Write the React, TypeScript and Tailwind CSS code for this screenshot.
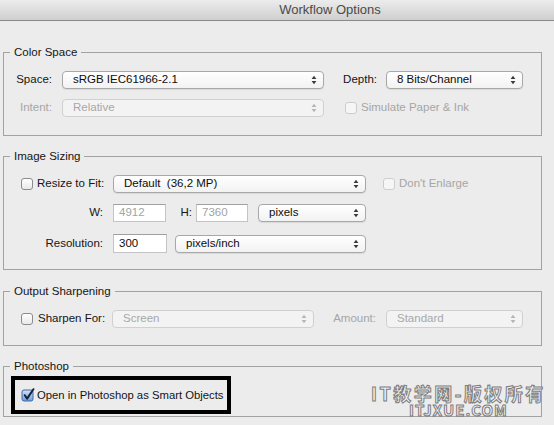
import React from 'react';

const Arrows = ({ color = '#3a3a3a' }: { color?: string }) => (
  <svg width="6" height="10" viewBox="0 0 6 10" className="shrink-0">
    <path d="M3 0.8L5.4 3.9H0.6Z M3 9.2L0.6 6.1H5.4Z" fill={color} />
  </svg>
);

const Select = ({ value, width, disabled }: { value: string; width: string; disabled?: boolean }) => (
  <div
    className={`${width} h-[18px] flex items-center justify-between rounded-[4px] border pl-[10px] pr-[6px] ${
      disabled
        ? 'border-[#d0d0d0] bg-[#f3f3f3] text-[#a8a8a8]'
        : 'border-[#a8a8a8] bg-linear-to-b from-white to-[#f2f2f2] text-[#0d0d0d] shadow-[0_1px_1px_rgba(0,0,0,0.08)]'
    }`}
  >
    <span className="leading-none whitespace-pre">{value}</span>
    <Arrows color={disabled ? '#b5b5b5' : '#3a3a3a'} />
  </div>
);

const Check = ({ disabled }: { disabled?: boolean }) => (
  <span
    className={`block shrink-0 w-[12px] h-[12px] rounded-[3px] border ${
      disabled ? 'border-[#cdcdcd] bg-[#f6f6f6]' : 'border-[#8c8c8c] bg-linear-to-b from-white to-[#e9e9e9]'
    }`}
  />
);

const Checked = () => (
  <svg width="14" height="14" viewBox="0 0 14 14" className="block shrink-0">
    <defs>
      <linearGradient id="cbfill" x1="0" y1="0" x2="0" y2="1">
        <stop offset="0" stopColor="#d3e3f8" />
        <stop offset="1" stopColor="#6c9ddc" />
      </linearGradient>
    </defs>
    <rect x="1" y="2" width="11" height="11" rx="2" fill="url(#cbfill)" stroke="#41689f" />
    <path d="M3.8 7.2L6.1 10.6L12.4 1.2" stroke="#15233d" strokeWidth="2" fill="none" strokeLinecap="round" strokeLinejoin="round" />
  </svg>
);

const Input = ({ value, width, h = 'h-[18px]', muted }: { value: string; width: string; h?: string; muted?: boolean }) => (
  <div
    className={`${width} ${h} flex items-center bg-white border border-[#c4c4c4] border-t-[#9f9f9f] pl-[5px] ${
      muted ? 'text-[#a3a3a3]' : 'text-[#0d0d0d]'
    }`}
  >
    {value}
  </div>
);

const Group = ({ title, className, children }: { title: string; className: string; children: React.ReactNode }) => (
  <fieldset className={`ml-[3px] w-[539px] border border-[#a2a2a2] pl-[6px] ${className}`}>
    <legend className="px-[4px] leading-[16px] text-[#151515]">{title}</legend>
    {children}
  </fieldset>
);

export default function App() {
  return (
    <div className="relative w-[554px] h-[425px] overflow-hidden whitespace-nowrap bg-[#ececec] text-[11.5px] text-[#151515] font-['Liberation_Sans',Arial,sans-serif]">
      {/* title bar */}
      <div className="h-[21px] flex items-center justify-center pl-[106px] border-b border-[#8a8a8a] bg-linear-to-b from-[#ececec] to-[#cfcfcf]">
        <span className="text-[13px] text-[#4a4a4a]">Workflow Options</span>
      </div>

      <Group title="Color Space" className="mt-[23px] pt-[11px] pb-[18px]">
        <div className="flex items-center">
          <span className="w-[42px] shrink-0 text-right">Space:</span>
          <div className="ml-[10px]">
            <Select value="sRGB IEC61966-2.1" width="w-[262px]" />
          </div>
          <span className="w-[53px] shrink-0 text-right">Depth:</span>
          <div className="ml-[9px]">
            <Select value="8 Bits/Channel" width="w-[137px]" />
          </div>
        </div>
        <div className="flex items-center mt-[10px]">
          <span className="w-[42px] shrink-0 text-right text-[#a6a6a6]">Intent:</span>
          <div className="ml-[10px]">
            <Select value="Relative" width="w-[262px]" disabled />
          </div>
          <div className="ml-[21px]">
            <Check disabled />
          </div>
          <span className="ml-[4px] text-[#a6a6a6]">Simulate Paper &amp; Ink</span>
        </div>
      </Group>

      <Group title="Image Sizing" className="mt-[12px] pt-[11px] pb-[16px]">
        <div className="flex items-center">
          <div className="w-[93px] shrink-0 flex items-center gap-[4px] pl-[11px]">
            <Check />
            <span>Resize to Fit:</span>
          </div>
          <div className="ml-[10px]">
            <Select value="Default  (36,2 MP)" width="w-[253px]" />
          </div>
          <div className="ml-[17px]">
            <Check disabled />
          </div>
          <span className="ml-[4px] text-[#a6a6a6]">Don't Enlarge</span>
        </div>
        <div className="flex items-center mt-[11px]">
          <span className="w-[93px] shrink-0 text-right">W:</span>
          <div className="ml-[10px]">
            <Input value="4912" width="w-[53px]" muted />
          </div>
          <span className="w-[26px] shrink-0 text-right">H:</span>
          <div className="ml-[4px]">
            <Input value="7360" width="w-[52px]" muted />
          </div>
          <div className="ml-[10px]">
            <Select value="pixels" width="w-[108px]" />
          </div>
        </div>
        <div className="flex items-center mt-[12px]">
          <span className="w-[93px] shrink-0 text-right">Resolution:</span>
          <div className="ml-[10px]">
            <Input value="300" width="w-[54px]" h="h-[19px]" />
          </div>
          <div className="ml-[8px]">
            <Select value="pixels/inch" width="w-[191px]" />
          </div>
        </div>
      </Group>

      <Group title="Output Sharpening" className="mt-[13px] pt-[11px] pb-[17px]">
        <div className="flex items-center">
          <div className="w-[92px] shrink-0 flex items-center gap-[5px] pl-[11px]">
            <Check />
            <span>Sharpen For:</span>
          </div>
          <div className="ml-[10px]">
            <Select value="Screen" width="w-[202px]" disabled />
          </div>
          <span className="w-[62px] shrink-0 text-right text-[#a6a6a6]">Amount:</span>
          <div className="ml-[10px]">
            <Select value="Standard" width="w-[137px]" disabled />
          </div>
        </div>
      </Group>

      <Group title="Photoshop" className="mt-[12px] pt-[2px] pb-[2px]">
        <div className="ml-[1px] w-[220px] h-[38px] border-[4px] border-black flex items-center pl-[6px]">
          <Checked />
          <span className="ml-[2px] text-[11.3px]">Open in Photoshop as Smart Objects</span>
        </div>
      </Group>

      {/* watermark */}
      <div className="absolute left-[371px] top-[383px] flex flex-col items-center font-bold text-[#f4f4f4] [-webkit-text-stroke:1px_#7c7c7c] font-['Noto_Sans_CJK_SC','Liberation_Sans',sans-serif]">
        <span className="text-[18px] leading-[20px] tracking-[2.5px]">IT教学网-版权所有</span>
        <span className="text-[15px] leading-[14px] tracking-[1px]">ITJXUE.COM</span>
      </div>
    </div>
  );
}
